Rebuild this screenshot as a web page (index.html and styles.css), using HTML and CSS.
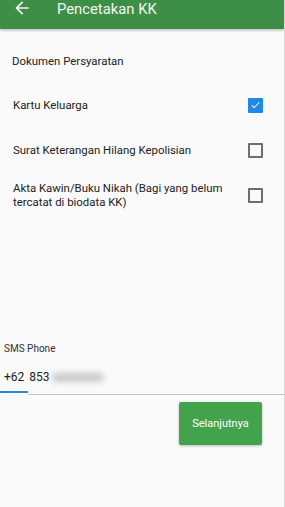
FILE: index.html
```html
<!DOCTYPE html>
<html>
<head>
  <meta charset="UTF-8" />
  <meta name="viewport" content="width=device-width, initial-scale=1.0" />
  <title>Pencetakan KK</title>
  <link rel="stylesheet" href="styles.css">
</head>
<body>
  <div class="screen">
    <!-- Top app bar -->
    <div class="appbar">
      <svg class="back" width="20" height="20" viewBox="0 0 24 24">
        <path d="M20 11H7.83l5.59-5.59L12 4l-8 8 8 8 1.41-1.41L7.83 13H20v-2z" fill="#f4f4f4"/>
      </svg>
      <span class="title">Pencetakan KK</span>
    </div>

    <div class="content">
      <div class="section-title">Dokumen Persyaratan</div>

      <!-- Required documents list -->
      <div class="docs">
        <div class="doc-row">
          <span class="doc-label">Kartu Keluarga</span>
          <span class="box checked">
            <svg width="12" height="12" viewBox="0 0 24 24">
              <path d="M9 16.2L4.8 12l-1.4 1.4L9 19 21 7l-1.4-1.4L9 16.2z" fill="#ffffff"/>
            </svg>
          </span>
        </div>
        <div class="doc-row">
          <span class="doc-label">Surat Keterangan Hilang Kepolisian</span>
          <span class="box"></span>
        </div>
        <div class="doc-row">
          <span class="doc-label">Akta Kawin/Buku Nikah (Bagi yang belum tercatat di biodata KK)</span>
          <span class="box"></span>
        </div>
      </div>

      <!-- Phone field -->
      <div class="phone">
        <div class="phone-label">SMS Phone</div>
        <div class="phone-input">
          <span class="prefix">+62</span>
          <span class="number">853</span>
          <span class="masked"></span>
        </div>
        <div class="underline">
          <span class="focus"></span>
          <span class="rest"></span>
        </div>
      </div>

      <div class="actions">
        <button class="next">Selanjutnya</button>
      </div>
    </div>
  </div>
</body>
</html>
```

FILE: styles.css
```css
html, body {
  margin: 0;
  padding: 0;
  background: #fafafa;
}
.screen {
  width: 284px;
  height: 507px;
  border-right: 1px solid #d8d8d8;
  font-family: Roboto, "Noto Sans", sans-serif;
  color: #222222;
  overflow: hidden;
}
.appbar {
  height: 29px;
  background: #3d8f47;
  display: flex;
  align-items: flex-start;
  padding-left: 12px;
  box-shadow: 0 1px 3px rgba(0, 0, 0, 0.3);
  position: relative;
}
.back {
  margin-top: -2px;
}
.title {
  color: #f4f4f4;
  font-size: 14.8px;
  line-height: 18px;
  margin-left: 25px;
}
.section-title {
  font-size: 11.4px;
  line-height: 15px;
  margin: 25px 0 0 12px;
}
.docs {
  display: flex;
  flex-direction: column;
  gap: 15px;
  margin-top: 21px;
  padding: 0 21px 0 13px;
}
.doc-row {
  display: flex;
  align-items: center;
  justify-content: space-between;
  min-height: 30px;
}
.doc-label {
  font-size: 11.4px;
  line-height: 14px;
  max-width: 215px;
}
.box {
  width: 11px;
  height: 11px;
  border: 2px solid #6e6e6e;
  border-radius: 1px;
  flex-shrink: 0;
  display: flex;
  align-items: center;
  justify-content: center;
}
.box.checked {
  background: #2288e8;
  border-color: #2288e8;
}
.phone {
  margin-top: 133px;
}
.phone-label {
  font-size: 10px;
  line-height: 12px;
  margin-left: 4px;
  color: #333333;
}
.phone-input {
  display: flex;
  align-items: center;
  margin-top: 15px;
  padding-left: 4px;
  font-size: 12px;
  line-height: 15px;
}
.number {
  margin-left: 5px;
}
.masked {
  width: 52px;
  height: 9px;
  margin-left: 2px;
  background: #c8c8c8;
  border-radius: 5px;
  filter: blur(3px);
}
.underline {
  display: flex;
  align-items: flex-start;
  margin-top: 6px;
}
.focus {
  width: 28px;
  height: 2px;
  background: #2a88dc;
}
.rest {
  flex: 1;
  height: 1px;
  margin-top: 3px;
  background: #c4c4c4;
}
.actions {
  display: flex;
  justify-content: flex-end;
  padding-right: 22px;
  margin-top: 7px;
}
.next {
  width: 83px;
  height: 43px;
  border: none;
  border-radius: 2px;
  background: #43a34d;
  color: #ffffff;
  font-family: Roboto, "Noto Sans", sans-serif;
  font-size: 11px;
  box-shadow: 0 1px 3px rgba(0, 0, 0, 0.25);
}
```
